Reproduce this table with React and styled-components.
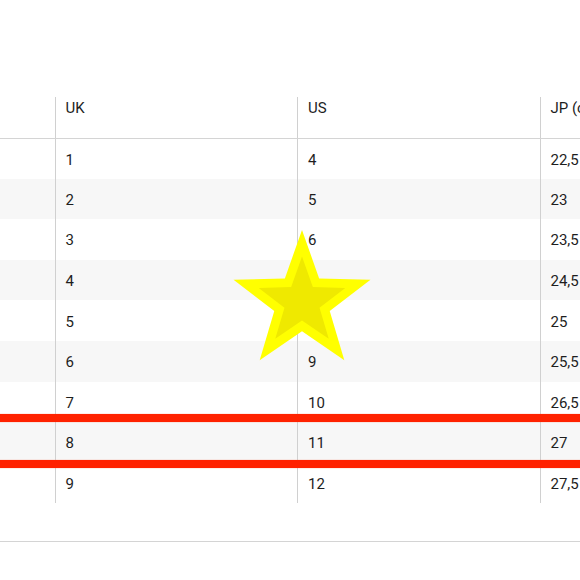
import React from 'react';
import { styled, createGlobalStyle } from 'styled-components';

const sizes = [
    { uk: '1', us: '4', jp: '22,5' },
    { uk: '2', us: '5', jp: '23' },
    { uk: '3', us: '6', jp: '23,5' },
    { uk: '4', us: '7', jp: '24,5' },
    { uk: '5', us: '8', jp: '25' },
    { uk: '6', us: '9', jp: '25,5' },
    { uk: '7', us: '10', jp: '26,5' },
    { uk: '8', us: '11', jp: '27' },
    { uk: '9', us: '12', jp: '27,5' },
];

// five-point star around (cx, cy), inner radius at 0.405 of outer
const starPoints = (cx, cy, R) => {
    const r = R * 0.405;
    const pts = [];
    for (let i = 0; i < 10; i++) {
        const rad = i % 2 === 0 ? R : r;
        const a = (Math.PI / 5) * i - Math.PI / 2;
        pts.push(`${(cx + rad * Math.cos(a)).toFixed(2)},${(cy + rad * Math.sin(a)).toFixed(2)}`);
    }
    return pts.join(' ');
};

export default function App() {
    return (
        <>
            <GlobalStyle />
            <Page>
                <TableWrap>
                    <SizeTable>
                        <thead>
                            <tr>
                                <HeadCell $first />
                                <HeadCell>UK</HeadCell>
                                <HeadCell>US</HeadCell>
                                <HeadCell>JP (cm)</HeadCell>
                            </tr>
                        </thead>
                        <tbody>
                            {sizes.map((s, i) => (
                                <Row key={s.uk} $striped={i % 2 === 1}>
                                    <Cell $first />
                                    <Cell>{s.uk}</Cell>
                                    <Cell>{s.us}</Cell>
                                    <Cell>{s.jp}</Cell>
                                </Row>
                            ))}
                        </tbody>
                    </SizeTable>
                </TableWrap>
                <Divider />

                {/* markup drawn over the table */}
                <RedLine $top={414} />
                <RedLine $top={460} />
                <Star viewBox="0 0 140 136">
                    <polygon points={starPoints(70, 72, 72)} fill="#ffff00" />
                    <polygon points={starPoints(70, 72, 45.5)} fill="#efe900" />
                </Star>
            </Page>
        </>
    );
}

const GlobalStyle = createGlobalStyle`
    body {
        margin: 0;
        background: #fff;
        font-family: Roboto, "Liberation Sans", sans-serif;
    }
`;

const Page = styled.div`
    position: relative;
    width: 580px;
    height: 580px;
    overflow: hidden;
    background: #fff;
`;

const TableWrap = styled.div`
    padding-top: 97px;
`;

const SizeTable = styled.table`
    border-collapse: collapse;
    table-layout: fixed;
    width: 782.5px;
`;

const HeadCell = styled.th`
    width: ${(props) => (props.$first ? '55px' : '242.5px')};
    height: 41px;
    box-sizing: border-box;
    padding: 3px 10px 0;
    vertical-align: top;
    text-align: left;
    font-weight: 400;
    font-size: 15px;
    line-height: 17px;
    color: #1e1e1e;
    white-space: nowrap;
    border-bottom: 1px solid #d4d4d4;
    border-left: ${(props) => (props.$first ? 'none' : '1px solid #d0d0d0')};
`;

const Row = styled.tr`
    background: ${(props) => (props.$striped ? '#f7f7f7' : '#fff')};
`;

const Cell = styled.td`
    height: 40.6px;
    box-sizing: border-box;
    padding: 3px 10px 0;
    vertical-align: middle;
    font-size: 15px;
    line-height: 17px;
    color: #1e1e1e;
    white-space: nowrap;
    border-left: ${(props) => (props.$first ? 'none' : '1px solid #d0d0d0')};
`;

const Divider = styled.div`
    margin-top: 38px;
    height: 1px;
    background: #d4d4d4;
`;

const RedLine = styled.div`
    position: absolute;
    left: 0;
    right: 0;
    top: ${(props) => props.$top}px;
    height: 8px;
    background: #ff2200;
    box-shadow: 0 0 1px rgba(255, 80, 40, 0.6);
`;

const Star = styled.svg`
    position: absolute;
    left: 232px;
    top: 230px;
    width: 140px;
    height: 136px;
`;
